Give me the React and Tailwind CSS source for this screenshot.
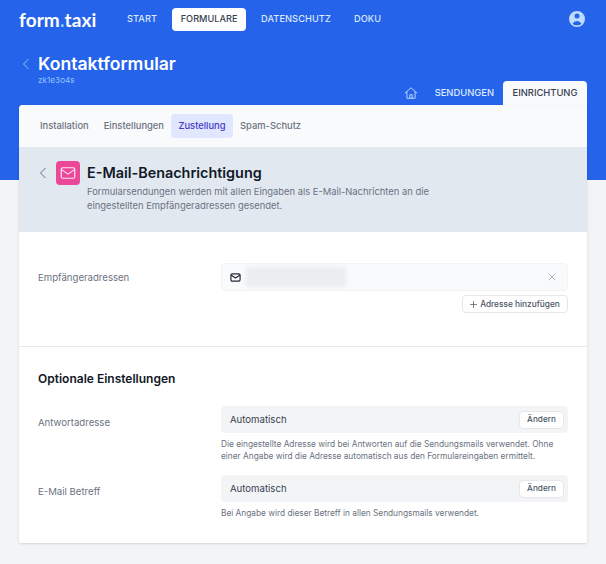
import React from "react";

const font = { fontFamily: '"Inter", "Liberation Sans", sans-serif' };

function Field({ label, help }) {
  return (
    <div className="flex mt-[13px] first:mt-0">
      <div className="w-[183px] pt-[7px] text-[9.6px] leading-[20px] text-[#6b7280]">{label}</div>
      <div className="w-[347px]">
        <div className="flex h-[27px] items-center justify-between rounded-[4px] bg-[#f3f4f6] pl-[9px] pr-[4px]">
          <span className="pt-[1px] text-[9.6px] text-[#374151]">Automatisch</span>
          <span className="flex h-[18px] w-[45px] items-center justify-center rounded-[4px] border border-[#e5e7eb] bg-white text-[8.2px] font-medium text-[#4b5563]">Ändern</span>
        </div>
        <p className="mt-[5px] text-[8.3px] leading-[12px] text-[#6b7280]">{help}</p>
      </div>
    </div>
  );
}

function NavItem({ children, active }) {
  return (
    <a className={active
      ? "flex h-[23px] w-[74px] items-center justify-center rounded-[4px] bg-white text-[9.2px] font-medium text-[#374151]"
      : "px-[8px] text-[9.2px] font-medium tracking-[0.1px] text-[#dbeafe]"}>
      {children}
    </a>
  );
}

function Tab({ children, active }) {
  return (
    <a className={active
      ? "flex h-[24px] w-[62px] items-center justify-center rounded-[4px] bg-[#e0e7ff] text-[9.4px] font-medium text-[#4338ca]"
      : "px-[7px] text-[9.4px] font-medium text-[#6b7280] first:pr-[8px]"}>
      {children}
    </a>
  );
}

export default function App() {
  return (
    <div style={font} className="min-h-[564px] w-[606px] overflow-hidden bg-[#f3f4f6]">
      <div className="h-[180px] bg-[#2563eb] px-[19px]">
        <nav className="flex h-[38px] items-center gap-[7px]">
          <div className="w-[93px] text-[19px] font-bold leading-none tracking-[0.1px] text-white" style={{ fontFamily: '"Lato", sans-serif' }}>
            form<span className="text-[#7dd3fc]">.</span>taxi
          </div>
          <NavItem>START</NavItem>
          <NavItem active>FORMULARE</NavItem>
          <NavItem>DATENSCHUTZ</NavItem>
          <NavItem>DOKU</NavItem>
          <svg className="ml-auto h-[20px] w-[20px] text-[#bfdbfe]" viewBox="0 0 20 20" fill="currentColor">
            <path fillRule="evenodd" clipRule="evenodd" d="M18 10a8 8 0 1 1-16 0 8 8 0 0 1 16 0Zm-5.5-3a2.5 2.5 0 1 1-5 0 2.5 2.5 0 0 1 5 0ZM10 12a5 5 0 0 0-4.5 2.8A6.2 6.2 0 0 0 10 16.3a6.2 6.2 0 0 0 4.5-1.5A5 5 0 0 0 10 12Z" />
          </svg>
        </nav>
        <div className="mt-[13px] flex">
          <svg className="mt-[7px] ml-[3px] h-[12px] w-[8px] text-[#93c5fd]" viewBox="0 0 8 12" fill="none" stroke="currentColor" strokeWidth="1">
            <path d="M6.5 1 1.5 6l5 5" />
          </svg>
          <div className="ml-[8px]">
            <h1 className="text-[17.6px] font-semibold leading-[26px] text-white">Kontaktformular</h1>
            <div className="-mt-[3px] text-[8.2px] leading-[12px] text-[#93c5fd]">zk1e3o4s</div>
          </div>
        </div>
        <div className="-mt-[5px] flex h-[24px] items-center justify-end">
          <svg className="h-[14px] w-[14px] text-[#bfdbfe]" viewBox="0 0 24 24" fill="none" stroke="currentColor" strokeWidth="1.6" strokeLinecap="round" strokeLinejoin="round">
            <path d="M2 12 12 3l10 9M5 10v11h14V10M10 21v-6h4v6" />
          </svg>
          <a className="ml-[17px] text-[9.4px] font-medium text-[#dbeafe]">SENDUNGEN</a>
          <a className="ml-[9px] flex h-[24px] w-[84px] items-center justify-center rounded-t-[4px] bg-[#f9fafb] text-[9.4px] font-medium text-[#374151]">EINRICHTUNG</a>
        </div>
      </div>

      <main className="relative mx-[19px] -mt-[75px] w-[568px] overflow-hidden rounded-b-[2px] rounded-tl-[4px] bg-white shadow-sm">
        <div className="flex h-[42px] items-center bg-[#f9fafb] px-[14px]">
          <Tab>Installation</Tab>
          <Tab>Einstellungen</Tab>
          <Tab active>Zustellung</Tab>
          <Tab>Spam-Schutz</Tab>
        </div>

        <div className="flex h-[85px] bg-[#e2e8f0] pl-[20px] pt-[14px]">
          <svg className="mt-[6px] h-[12px] w-[8px] text-[#6b7280]" viewBox="0 0 8 12" fill="none" stroke="currentColor" strokeWidth="1">
            <path d="M6.5 1 1.5 6l5 5" />
          </svg>
          <div className="ml-[9px] flex h-[24px] w-[24px] items-center justify-center rounded-[4px] bg-[#ec4899]">
            <svg className="h-[18px] w-[18px] text-[#fce7f3]" viewBox="0 0 24 24" fill="none" stroke="currentColor" strokeWidth="1.6" strokeLinecap="round" strokeLinejoin="round">
              <rect x="3" y="5" width="18" height="14" rx="2" />
              <path d="m3.5 7.5 8.5 6 8.5-6" />
            </svg>
          </div>
          <div className="ml-[7px]">
            <h2 className="text-[14.4px] font-semibold leading-[24px] text-[#111827]">E-Mail-Benachrichtigung</h2>
            <p className="w-[360px] text-[9.4px] leading-[14px] text-[#6b7280]">
              Formularsendungen werden mit allen Eingaben als E-Mail-Nachrichten an die eingestellten Empfängeradressen gesendet.
            </p>
          </div>
        </div>

        <section className="flex h-[115px] border-b border-[#e5e7eb] px-[19px] pt-[31px]">
          <div className="w-[183px] pt-[5px] text-[9.6px] leading-[20px] text-[#6b7280]">Empfängeradressen</div>
          <div className="w-[347px]">
            <div className="flex h-[28px] items-center rounded-[4px] border border-[#f3f4f6] bg-[#f9fafb] pl-[8px] pr-[11px]">
              <svg className="h-[11px] w-[11px] text-[#1f2937]" viewBox="0 0 24 24" fill="none" stroke="currentColor" strokeWidth="2.6" strokeLinecap="round" strokeLinejoin="round">
                <rect x="2" y="4" width="20" height="16" rx="3" />
                <path d="m3 7 9 6 9-6" />
              </svg>
              <div className="ml-[5px] h-[20px] w-[100px] bg-[#e5e7eb]/70 blur-[2px]" />
              <svg className="ml-auto h-[8px] w-[8px] text-[#9ca3af]" viewBox="0 0 10 10" fill="none" stroke="currentColor" strokeWidth="1">
                <path d="m1 1 8 8M9 1l-8 8" />
              </svg>
            </div>
            <div className="mt-[4px] flex justify-end">
              <button className="flex h-[18px] w-[106px] items-center justify-center gap-[3px] whitespace-nowrap rounded-[4px] border border-[#e5e7eb] bg-white text-[8.3px] font-medium text-[#4b5563]">
                <svg className="h-[7px] w-[7px]" viewBox="0 0 10 10" fill="none" stroke="currentColor" strokeWidth="1">
                  <path d="M5 0v10M0 5h10" />
                </svg>
                Adresse hinzufügen
              </button>
            </div>
          </div>
        </section>

        <section className="h-[196px] px-[19px] pt-[23px]">
          <h3 className="text-[12px] font-semibold leading-[18px] text-[#111827]">Optionale Einstellungen</h3>
          <div className="mt-[18px]">
            <Field label="Antwortadresse" help="Die eingestellte Adresse wird bei Antworten auf die Sendungsmails verwendet. Ohne einer Angabe wird die Adresse automatisch aus den Formulareingaben ermittelt." />
            <Field label="E-Mail Betreff" help="Bei Angabe wird dieser Betreff in allen Sendungsmails verwendet." />
          </div>
        </section>
      </main>
    </div>
  );
}
